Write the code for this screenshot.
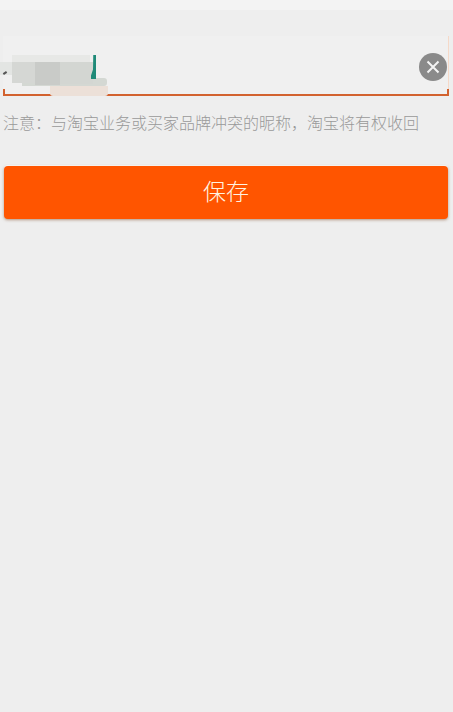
<style>
:global(body) { margin: 0; background: #eeeeee; }
.page {
  width: 453px; height: 712px; background: #eeeeee; overflow: hidden;
  font-family: "Noto Sans CJK SC", "Liberation Sans", sans-serif;
  display: flex; flex-direction: column;
}
.top { height: 10px; background: #f3f3f3; flex: none; }
.field {
  position: relative; box-sizing: border-box; height: 60px; margin: 26px 4px 0 3px;
  display: flex; align-items: center; justify-content: flex-end; padding: 2px 2px 0 0;
  background: #f0f0f0;
}
.line { position: absolute; left: 0; right: 0; bottom: 0; height: 2px; background: #d2622f; }
.tick { position: absolute; bottom: 0; width: 2px; background: #d2622f; }
.tick.l { left: 0; height: 7px; }
.tick.r { right: 0; height: 7px; }
.edge { position: absolute; right: 0; top: 0; bottom: 7px; width: 1px; background: #f5d9c8; }
.clear {
  width: 28px; height: 28px; border: 0; padding: 0; border-radius: 50%; background: #8a8a8a;
  display: grid; place-items: center; position: relative;
}
.clear svg { width: 16px; height: 16px; display: block; }
.smudge { position: absolute; left: -3px; top: 17px; width: 112px; height: 44px; overflow: hidden; }
.smudge i { position: absolute; display: block; }
.s0 { left: 12px; top: 2px; width: 78px; height: 8px; background: #e7e8e6; }
.s2 { left: 0; top: 9px; width: 12px; height: 13px; background: #e3e5e3; }
.s3 { left: 12px; top: 9px; width: 24px; height: 21px; background: #d5d7d4; }
.s4 { left: 35px; top: 9px; width: 25px; height: 23px; background: #c9cbc8; }
.s5 { left: 60px; top: 9px; width: 33px; height: 22px; background: #d3d6d2; }
.s6 { left: 22px; top: 25px; width: 85px; height: 8px; border-radius: 0 3px 3px 0; background: #d4d8d3; }
.s7 { left: 50px; top: 33px; width: 58px; height: 10px; border-radius: 0 0 3px 3px; background: #ece0d8; }
.s1 { left: 91px; top: 2px; width: 5px; height: 24px; background: #1f8a78; clip-path: polygon(45% 0, 100% 0, 100% 100%, 0 100%, 0 85%, 40% 60%); }
.s8 { left: 3px; top: 19px; width: 4px; height: 2px; background: #555; transform: rotate(-35deg); }
.note {
  margin: 14px 0 0 3px; font-size: 16px; line-height: 24px; font-weight: 300; color: #999999; white-space: nowrap;
}
.save {
  flex: none; box-sizing: border-box; width: 444px; height: 53px; margin: 32px 0 0 4px;
  background: #ff5500; color: #fff3e0; border: 0; border-radius: 4px;
  font: inherit; font-size: 23px; line-height: 49px; padding: 0 0 4px; font-weight: 300;
  box-shadow: 0 1px 3px rgba(120, 60, 20, .5), 0 -1px 0 #fff;
}
</style>

<div class="page">
  <div class="top"></div>
  <div class="field">
    <div class="edge"></div>
    <div class="line"></div>
    <div class="tick l"></div>
    <div class="tick r"></div>
    <div class="smudge">
      <i class="s0"></i><i class="s2"></i><i class="s6"></i><i class="s3"></i><i class="s4"></i><i class="s5"></i><i class="s7"></i><i class="s1"></i><i class="s8"></i>
    </div>
    <button class="clear" aria-label="清除">
      <svg viewBox="0 0 16 16"><path d="M2.5 2.5l11 11M13.5 2.5l-11 11" stroke="#f4f4f4" stroke-width="2" fill="none"/></svg>
    </button>
  </div>
  <p class="note">注意：与淘宝业务或买家品牌冲突的昵称，淘宝将有权收回</p>
  <button class="save">保存</button>
</div>
